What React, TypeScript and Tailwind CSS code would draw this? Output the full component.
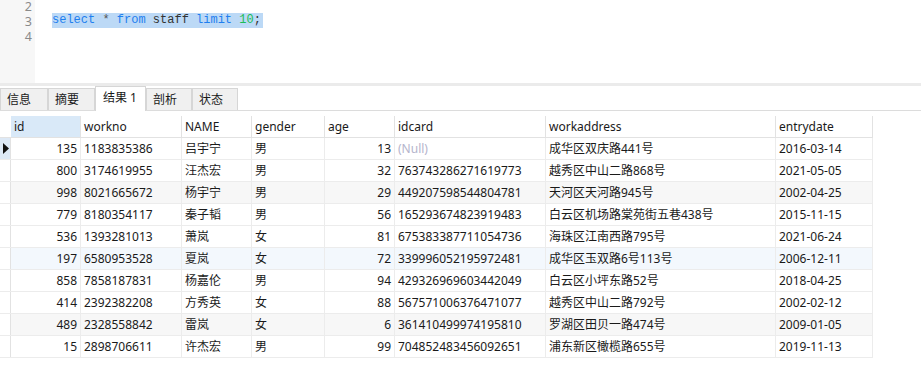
import React from "react";

const cols = [
  { key: "id", label: "id", w: "w-[70px]", right: true },
  { key: "workno", label: "workno", w: "w-[101px]" },
  { key: "name", label: "NAME", w: "w-[70px]" },
  { key: "gender", label: "gender", w: "w-[73px]" },
  { key: "age", label: "age", w: "w-[70px]", right: true },
  { key: "idcard", label: "idcard", w: "w-[151px]" },
  { key: "addr", label: "workaddress", w: "w-[230px]" },
  { key: "date", label: "entrydate", w: "w-[97px]" },
];

const rows: string[][] = [
  ["135", "1183835386", "吕宇宁", "男", "13", "", "成华区双庆路441号", "2016-03-14"],
  ["800", "3174619955", "汪杰宏", "男", "32", "763743286271619773", "越秀区中山二路868号", "2021-05-05"],
  ["998", "8021665672", "杨宇宁", "男", "29", "449207598544804781", "天河区天河路945号", "2002-04-25"],
  ["779", "8180354117", "秦子韬", "男", "56", "165293674823919483", "白云区机场路棠苑街五巷438号", "2015-11-15"],
  ["536", "1393281013", "萧岚", "女", "81", "675383387711054736", "海珠区江南西路795号", "2021-06-24"],
  ["197", "6580953528", "夏岚", "女", "72", "339996052195972481", "成华区玉双路6号113号", "2006-12-11"],
  ["858", "7858187831", "杨嘉伦", "男", "94", "429326969603442049", "白云区小坪东路52号", "2018-04-25"],
  ["414", "2392382208", "方秀英", "女", "88", "567571006376471077", "越秀区中山二路792号", "2002-02-12"],
  ["489", "2328558842", "雷岚", "女", "6", "361410499974195810", "罗湖区田贝一路474号", "2009-01-05"],
  ["15", "2898706611", "许杰宏", "男", "99", "704852483456092651", "浦东新区橄榄路655号", "2019-11-13"],
];

// alternate shading as it shows in the grid; row 6 carries the hover tint
const rowBg = ["bg-white", "bg-white", "bg-[#f7f7f7]", "bg-white", "bg-white", "bg-[#f3f8fd]", "bg-white", "bg-white", "bg-[#f7f7f7]", "bg-white"];

const tabs = ["信息", "摘要", "结果 1", "剖析", "状态"];
const tabW = ["w-[48px]", "w-[47px]", "w-[51px]", "w-[46px]", "w-[46px]"];

export default function App() {
  return (
    <div
      className="w-[921px] h-[389px] bg-white overflow-hidden text-[12px] text-[#1a1a1a]"
      style={{ fontFamily: '"Noto Sans", "Noto Sans CJK SC", sans-serif' }}
    >
      {/* editor */}
      <div className="flex h-[83px] overflow-hidden">
        <div className="w-[35px] bg-[#f7f7f7] flex flex-col items-end pr-[3px] -mt-px text-[12.5px] text-[#8a8a8a]">
          {[2, 3, 4].map((n) => (
            <div key={n} className="h-[15px] leading-[15px]">{n}</div>
          ))}
        </div>
        <div className="flex-1 pl-[17px] -mt-[2px] text-[12px]" style={{ fontFamily: '"Liberation Mono", monospace' }}>
          <div className="h-[15px]" />
          <div className="h-[15px] leading-[15px] flex">
            <span className="bg-[#bcd9f6] whitespace-pre pr-[2px]">
              <span className="text-[#1f7fef]">select</span>
              <span className="text-[#555]"> * </span>
              <span className="text-[#1f7fef]">from</span>
              <span className="text-[#333]"> staff </span>
              <span className="text-[#1f7fef]">limit</span>
              <span> </span>
              <span className="text-[#1ebd5a]">10</span>
              <span className="text-[#333]">;</span>
            </span>
          </div>
          <div className="h-[15px]" />
        </div>
      </div>
      <div className="h-[3px] bg-[#ebebeb]" />

      {/* tabs */}
      <div className="h-[25px] flex items-end border-b border-[#dcdcdc]">
        {tabs.map((t, i) =>
          i === 2 ? (
            <div key={t} className={`h-[25px] ${tabW[i]} bg-white border border-b-0 border-[#d6d6d6] pl-[7px] leading-[22px] -mb-px relative`}>
              {t}
            </div>
          ) : (
            <div key={t} className={`h-[22px] ${tabW[i]} bg-[#f0f0f0] border border-b-0 border-[#d6d6d6] pl-[6px] leading-[21px]`}>
              {t}
            </div>
          )
        )}
      </div>

      {/* grid */}
      <div className="mt-[5px] w-[873px]">
        <div className="flex h-[22px] border-b border-[#e2e2e2]">
          <div className="w-[11px] border-r border-transparent" />
          {cols.map((c, i) => (
            <div
              key={c.key}
              className={`${c.w} h-full border-r border-[#e2e2e2] pl-[3px] leading-[21px] ${i === 0 ? "bg-[#d9e9f8]" : "bg-white"}`}
            >
              {c.label}
            </div>
          ))}
        </div>
        {rows.map((r, ri) => (
          <div key={ri} className={`flex h-[22px] border-b border-[#ececec] ${rowBg[ri]}`}>
            <div className={`w-[11px] border-r border-[#e2e2e2] flex items-center ${ri === 0 ? "bg-[#dde9f6]" : "bg-white"}`}>
              {ri === 0 && (
                <svg width="7" height="11" viewBox="0 0 7 11" className="ml-[3px]">
                  <path d="M0 0 L6 5.5 L0 11 Z" fill="#111" />
                </svg>
              )}
            </div>
            {cols.map((c, ci) => (
              <div
                key={c.key}
                className={`${c.w} h-full border-r border-[#ececec] leading-[21px] whitespace-nowrap overflow-hidden ${c.right ? "text-right pr-[3px]" : "pl-[3px]"}`}
              >
                {c.key === "idcard" && r[ci] === "" ? <span className="text-[#b4b4cc]">(Null)</span> : r[ci]}
              </div>
            ))}
          </div>
        ))}
      </div>
    </div>
  );
}
